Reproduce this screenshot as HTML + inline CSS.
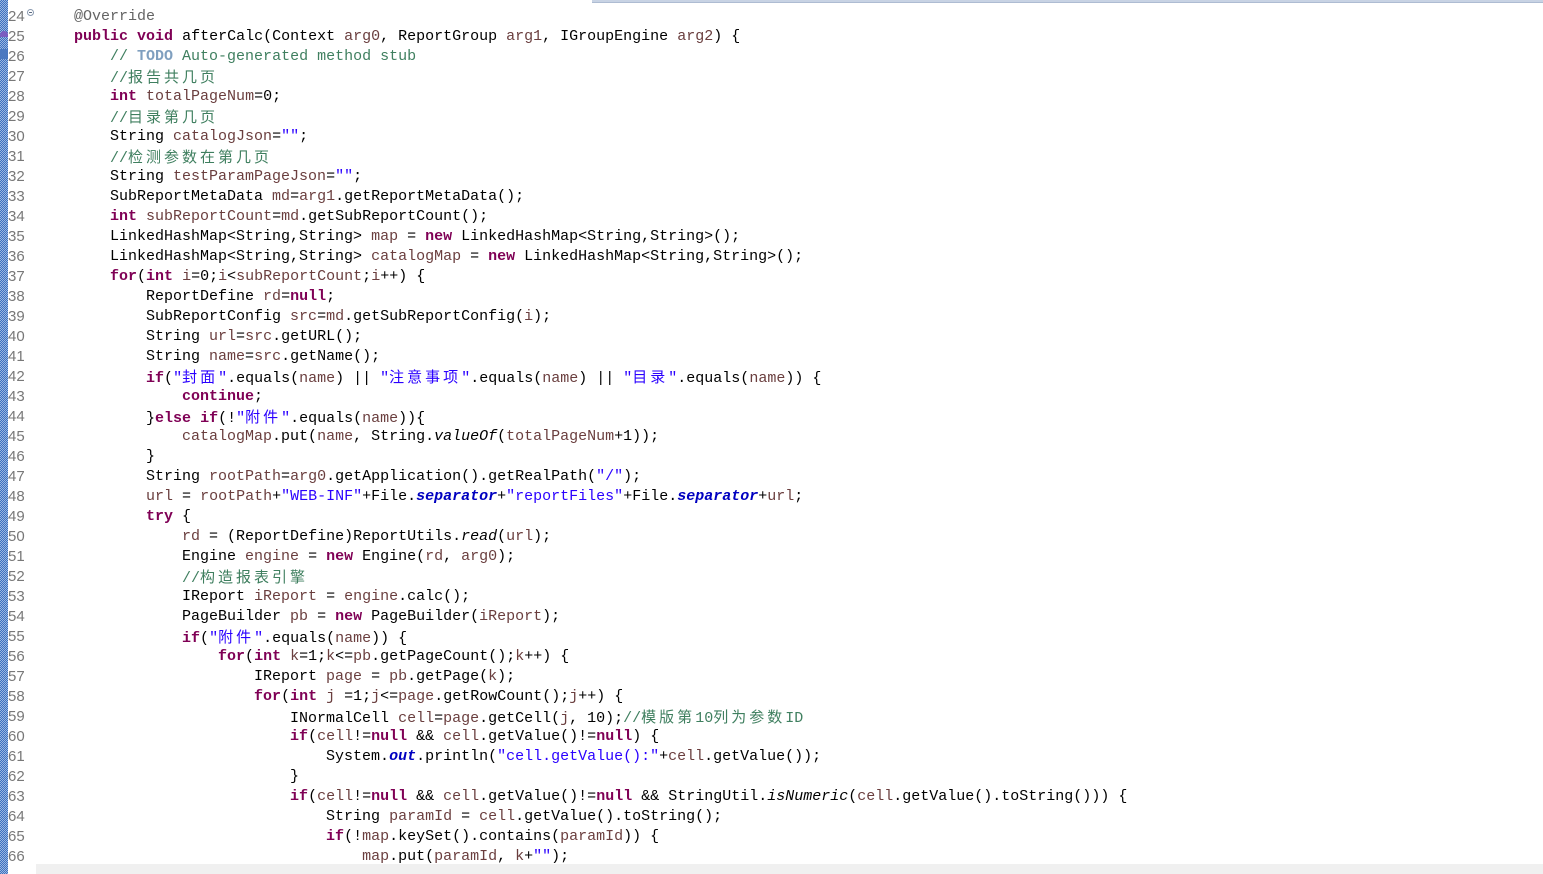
<!DOCTYPE html>
<html><head><meta charset="utf-8">
<style>
html,body{margin:0;padding:0;width:1543px;height:874px;overflow:hidden;background:#fff;}
.ruler{position:absolute;left:0;top:0;width:8px;height:874px;
 background-color:#9ab8e0;
 background-image:linear-gradient(45deg,#3d6fc0 25%,transparent 25%,transparent 75%,#3d6fc0 75%),linear-gradient(45deg,#3d6fc0 25%,transparent 25%,transparent 75%,#3d6fc0 75%);
 background-size:2px 2px;background-position:0 0,1px 1px;}
.gut{position:absolute;left:8px;top:0;width:27px;height:864px;background:#fff;}
.ln{position:absolute;left:8px;width:20px;font:15px/20px "Liberation Sans",sans-serif;color:#787878;text-align:left;}
.top{position:absolute;left:592px;top:0;width:951px;height:3px;background:#c8d3e4;border-bottom:1px solid #aebcd2;box-sizing:border-box;}
.bot{position:absolute;left:36px;top:864px;width:1507px;height:10px;background:#f0f0f0;}
.code{position:absolute;left:38px;top:7px;font:15px/20px "Liberation Mono","Noto Sans CJK SC",monospace;color:#000;white-space:normal;}
.code div{height:20px;white-space:pre;}
.k{color:#7f0055;font-weight:bold}
.v{color:#6a3e3e}
.s{color:#2a00ff}
.c{color:#3f7f5f}
.t{color:#7f9fbf;font-weight:bold}
.f{color:#0000c0;font-weight:bold;font-style:italic}
.i{font-style:italic}
.a{color:#646464}
.z{letter-spacing:3px;font-family:"Noto Sans CJK SC",sans-serif;}
.fold{position:absolute;left:27px;top:9px;width:7px;height:7px;border:1px solid #8a9ab0;border-radius:50%;box-sizing:border-box;}
.fold:after{content:"";position:absolute;left:1px;top:2px;width:3px;height:1px;background:#5a6a80;}
</style></head><body>
<div class="top"></div>
<div class="ruler"></div>
<div class="gut"></div>
<div class="fold"></div>
<div style="position:absolute;left:0;top:31px;width:8px;height:6px;background:#7a5cc0;border-radius:4px 4px 0 0;"></div>
<div style="position:absolute;left:0;top:49px;width:8px;height:10px;background:#4a78c0;"></div>
<div id="lns"></div>
<div class="code">
<div>    <span class="a">@Override</span></div>
<div>    <span class="k">public</span> <span class="k">void</span> afterCalc(Context <span class="v">arg0</span>, ReportGroup <span class="v">arg1</span>, IGroupEngine <span class="v">arg2</span>) {</div>
<div>        <span class="c">// <span class="t">TODO</span> Auto-generated method stub</span></div>
<div>        <span class="c">//<span class="z">报告共几页</span></span></div>
<div>        <span class="k">int</span> <span class="v">totalPageNum</span>=0;</div>
<div>        <span class="c">//<span class="z">目录第几页</span></span></div>
<div>        String <span class="v">catalogJson</span>=<span class="s">""</span>;</div>
<div>        <span class="c">//<span class="z">检测参数在第几页</span></span></div>
<div>        String <span class="v">testParamPageJson</span>=<span class="s">""</span>;</div>
<div>        SubReportMetaData <span class="v">md</span>=<span class="v">arg1</span>.getReportMetaData();</div>
<div>        <span class="k">int</span> <span class="v">subReportCount</span>=<span class="v">md</span>.getSubReportCount();</div>
<div>        LinkedHashMap&lt;String,String&gt; <span class="v">map</span> = <span class="k">new</span> LinkedHashMap&lt;String,String&gt;();</div>
<div>        LinkedHashMap&lt;String,String&gt; <span class="v">catalogMap</span> = <span class="k">new</span> LinkedHashMap&lt;String,String&gt;();</div>
<div>        <span class="k">for</span>(<span class="k">int</span> <span class="v">i</span>=0;<span class="v">i</span>&lt;<span class="v">subReportCount</span>;<span class="v">i</span>++) {</div>
<div>            ReportDefine <span class="v">rd</span>=<span class="k">null</span>;</div>
<div>            SubReportConfig <span class="v">src</span>=<span class="v">md</span>.getSubReportConfig(<span class="v">i</span>);</div>
<div>            String <span class="v">url</span>=<span class="v">src</span>.getURL();</div>
<div>            String <span class="v">name</span>=<span class="v">src</span>.getName();</div>
<div>            <span class="k">if</span>(<span class="s">"<span class="z">封面</span>"</span>.equals(<span class="v">name</span>) || <span class="s">"<span class="z">注意事项</span>"</span>.equals(<span class="v">name</span>) || <span class="s">"<span class="z">目录</span>"</span>.equals(<span class="v">name</span>)) {</div>
<div>                <span class="k">continue</span>;</div>
<div>            }<span class="k">else</span> <span class="k">if</span>(!<span class="s">"<span class="z">附件</span>"</span>.equals(<span class="v">name</span>)){</div>
<div>                <span class="v">catalogMap</span>.put(<span class="v">name</span>, String.<span class="i">valueOf</span>(<span class="v">totalPageNum</span>+1));</div>
<div>            }</div>
<div>            String <span class="v">rootPath</span>=<span class="v">arg0</span>.getApplication().getRealPath(<span class="s">"/"</span>);</div>
<div>            <span class="v">url</span> = <span class="v">rootPath</span>+<span class="s">"WEB-INF"</span>+File.<span class="f">separator</span>+<span class="s">"reportFiles"</span>+File.<span class="f">separator</span>+<span class="v">url</span>;</div>
<div>            <span class="k">try</span> {</div>
<div>                <span class="v">rd</span> = (ReportDefine)ReportUtils.<span class="i">read</span>(<span class="v">url</span>);</div>
<div>                Engine <span class="v">engine</span> = <span class="k">new</span> Engine(<span class="v">rd</span>, <span class="v">arg0</span>);</div>
<div>                <span class="c">//<span class="z">构造报表引擎</span></span></div>
<div>                IReport <span class="v">iReport</span> = <span class="v">engine</span>.calc();</div>
<div>                PageBuilder <span class="v">pb</span> = <span class="k">new</span> PageBuilder(<span class="v">iReport</span>);</div>
<div>                <span class="k">if</span>(<span class="s">"<span class="z">附件</span>"</span>.equals(<span class="v">name</span>)) {</div>
<div>                    <span class="k">for</span>(<span class="k">int</span> <span class="v">k</span>=1;<span class="v">k</span>&lt;=<span class="v">pb</span>.getPageCount();<span class="v">k</span>++) {</div>
<div>                        IReport <span class="v">page</span> = <span class="v">pb</span>.getPage(<span class="v">k</span>);</div>
<div>                        <span class="k">for</span>(<span class="k">int</span> <span class="v">j</span> =1;<span class="v">j</span>&lt;=<span class="v">page</span>.getRowCount();<span class="v">j</span>++) {</div>
<div>                            INormalCell <span class="v">cell</span>=<span class="v">page</span>.getCell(<span class="v">j</span>, 10);<span class="c">//<span class="z">模版第</span>10<span class="z">列为参数</span>ID</span></div>
<div>                            <span class="k">if</span>(<span class="v">cell</span>!=<span class="k">null</span> &amp;&amp; <span class="v">cell</span>.getValue()!=<span class="k">null</span>) {</div>
<div>                                System.<span class="f">out</span>.println(<span class="s">"cell.getValue():"</span>+<span class="v">cell</span>.getValue());</div>
<div>                            }</div>
<div>                            <span class="k">if</span>(<span class="v">cell</span>!=<span class="k">null</span> &amp;&amp; <span class="v">cell</span>.getValue()!=<span class="k">null</span> &amp;&amp; StringUtil.<span class="i">isNumeric</span>(<span class="v">cell</span>.getValue().toString())) {</div>
<div>                                String <span class="v">paramId</span> = <span class="v">cell</span>.getValue().toString();</div>
<div>                                <span class="k">if</span>(!<span class="v">map</span>.keySet().contains(<span class="v">paramId</span>)) {</div>
<div>                                    <span class="v">map</span>.put(<span class="v">paramId</span>, <span class="v">k</span>+<span class="s">""</span>);</div>
</div>
<div class="bot"></div>
<script>
var h='';for(var n=24;n<=66;n++){h+='<div class="ln" style="top:'+(7+(n-24)*20)+'px">'+n+'</div>';}
document.getElementById('lns').innerHTML=h;
</script>
</body></html>
